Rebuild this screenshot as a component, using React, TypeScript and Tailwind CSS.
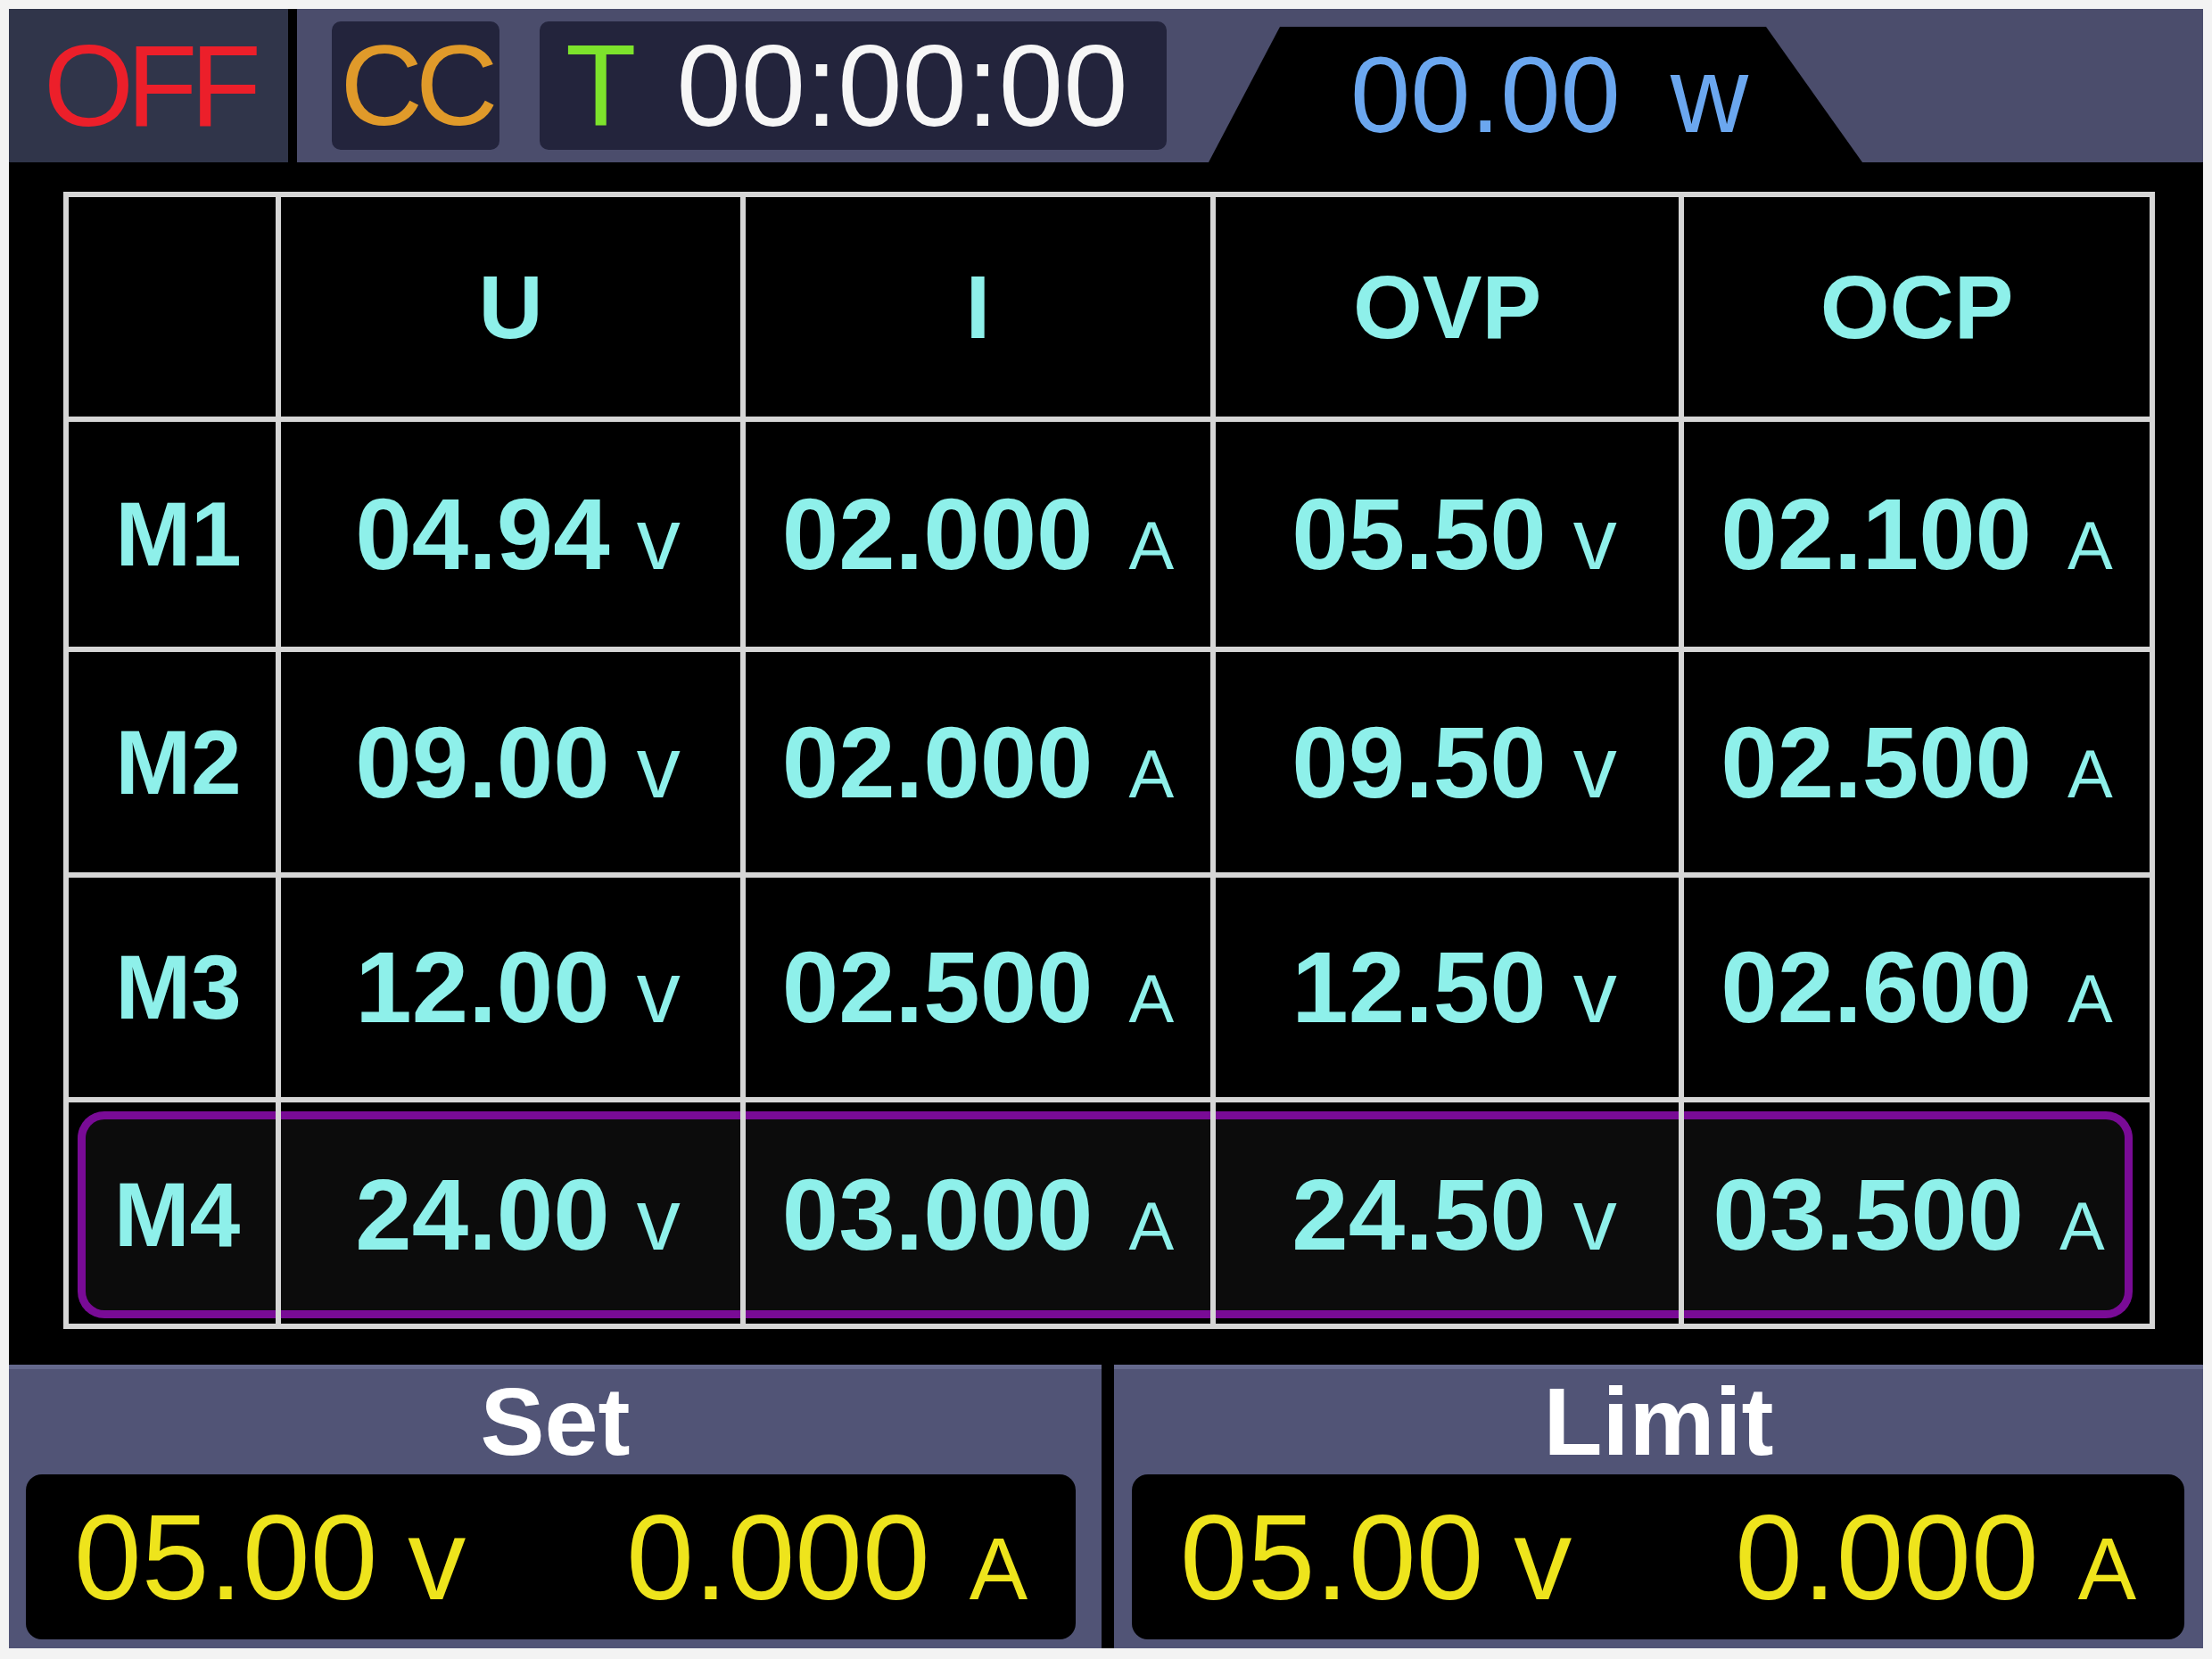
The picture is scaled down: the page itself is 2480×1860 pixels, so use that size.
import React from "react";

type Row = { id: string; u: string; i: string; ovp: string; ocp: string };

const ROWS: Row[] = [
  { id: "M1", u: "04.94", i: "02.000", ovp: "05.50", ocp: "02.100" },
  { id: "M2", u: "09.00", i: "02.000", ovp: "09.50", ocp: "02.500" },
  { id: "M3", u: "12.00", i: "02.500", ovp: "12.50", ocp: "02.600" },
  { id: "M4", u: "24.00", i: "03.000", ovp: "24.50", ocp: "03.500" },
];

const SELECTED = "M4";

const HEADERS = ["U", "I", "OVP", "OCP"];

// number + small unit glyph, as drawn on the instrument LCD
const Reading = ({ value, unit }: { value: string; unit: "v" | "A" }) => (
  <span className="flex items-baseline leading-none text-[#8ef0ea]">
    <span className="text-[114px] font-bold">{value}</span>
    {unit === "v" ? (
      <span className="ml-[30px] text-[98px] font-normal">v</span>
    ) : (
      <span className="ml-[40px] text-[76px] font-normal">A</span>
    )}
  </span>
);

const Cell = ({
  children,
  selected,
  first,
  last,
}: {
  children?: React.ReactNode;
  selected?: boolean;
  first?: boolean;
  last?: boolean;
}) => {
  if (!selected) {
    return (
      <div className="flex items-center justify-center bg-black">
        {children}
      </div>
    );
  }
  return (
    <div
      className={`flex bg-black pt-[10px] pb-[6px] ${first ? "pl-[10px]" : ""} ${
        last ? "pr-[19px]" : ""
      }`}
    >
      <div
        className={`flex flex-1 items-center justify-center border-y-[9px] border-[#790b96] bg-[#0c0c0c] ${
          first ? "rounded-l-[30px] border-l-[9px] pr-[22px]" : ""
        } ${last ? "rounded-r-[30px] border-r-[9px] pl-[10px]" : ""}`}
      >
        {children}
      </div>
    </div>
  );
};

const StatusBar = () => (
  <div className="flex h-[172px]">
    <div className="flex w-[313px] items-center bg-[#30354a] pl-[39px]">
      <span className="text-[130px] leading-none tracking-[-8px] text-[#ec1f2a]">
        OFF
      </span>
    </div>
    <div className="w-[10px] bg-black" />
    <div className="flex flex-1 items-center bg-[#4b4d6c]">
      <div className="ml-[39px] flex h-[144px] w-[188px] items-center justify-center rounded-[10px] bg-[#23243c]">
        <span className="text-[128px] leading-none tracking-[-8px] text-[#e09a2a]">
          CC
        </span>
      </div>
      <div className="ml-[45px] flex h-[144px] w-[703px] items-center rounded-[10px] bg-[#23243c] pl-[29px]">
        <span className="text-[130px] leading-none text-[#7de32c]">T</span>
        <span className="ml-[45px] text-[130px] leading-none text-[#f6f6f6]">
          00:00:00
        </span>
      </div>
      <div className="ml-[47px] flex h-[152px] w-[733px] items-center self-end bg-black pl-[159px] [clip-path:polygon(80px_0,625px_0,100%_100%,0_100%)]">
        <span className="flex items-baseline leading-none text-[#6ba7ef]">
          <span className="text-[121px]">00.00</span>
          <span className="ml-[56px] text-[121px]">w</span>
        </span>
      </div>
    </div>
  </div>
);

const Table = () => (
  <div className="mt-[33px] ml-[61px] mr-[54px] grid grid-cols-[232px_515px_521px_519px_522px] grid-rows-[246px_252px_247px_246px_248px] gap-[6px] bg-[#d6d6d6] p-[6px]">
    <Cell />
    {HEADERS.map((h) => (
      <Cell key={h}>
        <span className="text-[100px] font-bold leading-none text-[#8ef0ea]">
          {h}
        </span>
      </Cell>
    ))}
    {ROWS.map((r) => {
      const sel = r.id === SELECTED;
      return (
        <React.Fragment key={r.id}>
          <Cell selected={sel} first>
            <span className="pl-[14px] text-[102px] font-bold leading-none text-[#8ef0ea]">
              {r.id}
            </span>
          </Cell>
          <Cell selected={sel}>
            <span className="pl-[16px]">
              <Reading value={r.u} unit="v" />
            </span>
          </Cell>
          <Cell selected={sel}>
            <Reading value={r.i} unit="A" />
          </Cell>
          <Cell selected={sel}>
            <span className="pl-[16px]">
              <Reading value={r.ovp} unit="v" />
            </span>
          </Cell>
          <Cell selected={sel} last>
            <Reading value={r.ocp} unit="A" />
          </Cell>
        </React.Fragment>
      );
    })}
  </div>
);

const OutputPanel = ({
  title,
  volts,
  amps,
  inset,
}: {
  title: string;
  volts: string;
  amps: string;
  inset: string;
}) => (
  <div className="flex flex-col border-t-[5px] border-[#65698d] bg-[#515476] pb-[10px]">
    <div className="flex flex-1 items-center justify-center">
      <span className="text-[108px] font-bold leading-none text-white">
        {title}
      </span>
    </div>
    <div
      className={`flex h-[185px] items-center justify-between rounded-[18px] bg-black px-[54px] ${inset}`}
    >
      <span className="flex items-baseline leading-none text-[#eee41c]">
        <span className="text-[136px]">{volts}</span>
        <span className="ml-[34px] text-[130px]">v</span>
      </span>
      <span className="flex items-baseline leading-none text-[#eee41c]">
        <span className="text-[136px]">{amps}</span>
        <span className="ml-[44px] text-[98px]">A</span>
      </span>
    </div>
  </div>
);

export default function App() {
  return (
    <div className="h-[1860px] w-[2480px] bg-[#f3f3f3] px-[10px] pt-[10px] pb-[12px] font-['Liberation_Sans',Arial,sans-serif]">
      <div className="flex h-full flex-col bg-black">
        <StatusBar />
        <Table />
        <div className="mt-[40px] grid flex-1 grid-cols-[1225px_1221px] gap-[14px]">
          <OutputPanel title="Set" volts="05.00" amps="0.000" inset="ml-[19px] mr-[29px]" />
          <OutputPanel title="Limit" volts="05.00" amps="0.000" inset="ml-[20px] mr-[21px]" />
        </div>
      </div>
    </div>
  );
}
